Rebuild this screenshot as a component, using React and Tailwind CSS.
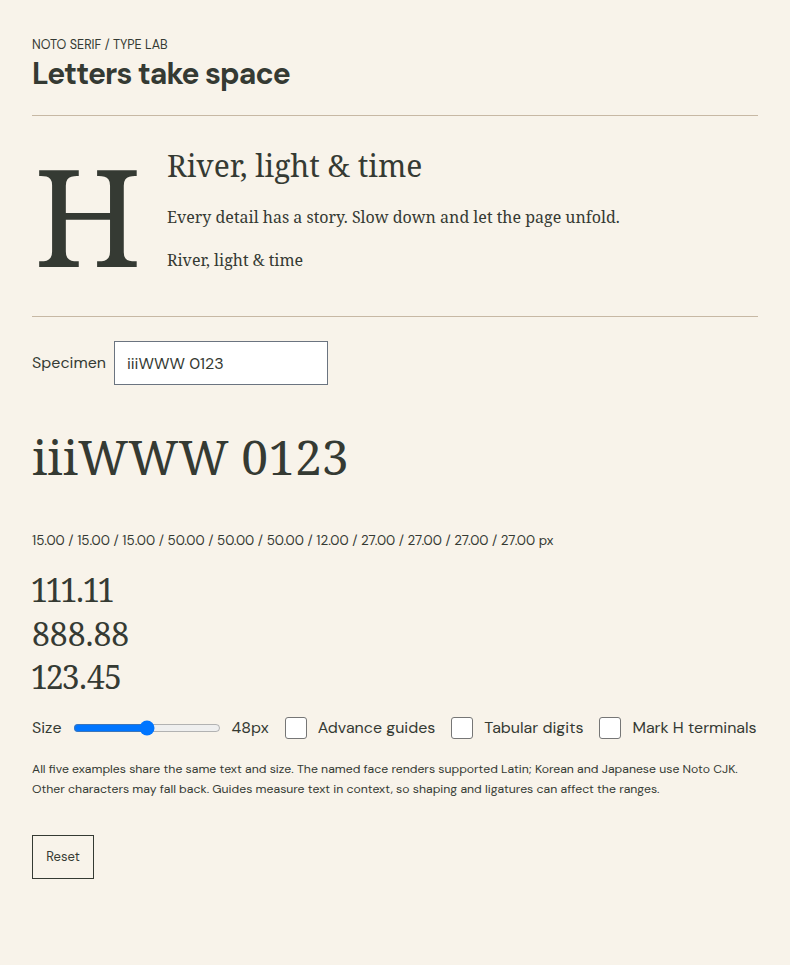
import React, { useState } from 'react'

const sans = "font-['DM_Sans','Inter','Liberation_Sans',sans-serif]"
const serif = "font-['Noto_Serif','DejaVu_Serif','Liberation_Serif',serif]"

const metrics = '15.00 / 15.00 / 15.00 / 50.00 / 50.00 / 50.00 / 12.00 / 27.00 / 27.00 / 27.00 / 27.00 px'

const Check = ({ label }) => (
    <label className="flex items-center gap-[11px] shrink-0 whitespace-nowrap">
        <input type="checkbox" className="w-[22px] h-[22px] m-0 appearance-none bg-white border border-[#767676] rounded-[3px]" />
        <span>{label}</span>
    </label>
)

const App = () => {
    const [specimen, setSpecimen] = useState('iiiWWW 0123')
    const [size, setSize] = useState(48)

    return (
        <div className={`min-h-[965px] bg-[#f8f3ea] text-[#353a33] ${sans}`}>
            <div className="px-8 pt-[37px] pb-10">
                {/* header */}
                <p className="text-[12.6px] leading-4 uppercase">Noto Serif / Type Lab</p>
                <h1 className="text-[30px] leading-9 font-bold tracking-[-0.03em] mt-[3px]">Letters take space</h1>
                <hr className="mt-[23px] border-0 border-t border-[#c7b8a4]" />

                {/* hero */}
                <div className={`flex items-start gap-[28px] pt-[18px] pb-[33px] ${serif}`}>
                    <div className="text-[136px] leading-[136px] pl-[2px] w-[107px] shrink-0 mt-[13px]">H</div>
                    <div className="pt-[14px]">
                        <h2 className="text-[30px] leading-[36px]">River, light &amp; time</h2>
                        <p className="text-base mt-[21px]">Every detail has a story. Slow down and let the page unfold.</p>
                        <p className="text-base mt-[19px]">River, light &amp; time</p>
                    </div>
                </div>
                <hr className="border-0 border-t border-[#c7b8a4]" />

                {/* specimen input */}
                <div className="flex items-center gap-2 mt-6 text-base">
                    <span>Specimen</span>
                    <input
                        value={specimen}
                        onChange={e => setSpecimen(e.target.value)}
                        className="w-[214px] h-[44px] px-3 bg-white border border-[#6b7480] outline-none text-base"
                    />
                </div>

                <div className={`mt-[44px] leading-[56px] ${serif}`} style={{ fontSize: size }}>{specimen}</div>

                <p className="text-[13.4px] leading-5 mt-[46px]">{metrics}</p>

                <div className={`mt-[17px] text-[32px] leading-[43.5px] proportional-nums ${serif}`}>
                    <div>111.11</div>
                    <div>888.88</div>
                    <div>123.45</div>
                </div>

                {/* controls */}
                <div className="flex items-center gap-4 mt-[17px] text-base whitespace-nowrap">
                    <div className="flex items-center gap-[11px] shrink-0">
                        <span>Size</span>
                        <input
                            type="range"
                            min="16"
                            max="80"
                            value={size}
                            onChange={e => setSize(Number(e.target.value))}
                            className="w-[148px] m-0 shrink-0"
                        />
                        <span>{size}px</span>
                    </div>
                    <Check label="Advance guides" />
                    <Check label="Tabular digits" />
                    <Check label="Mark H terminals" />
                </div>

                <p className="text-[12.25px] leading-5 mt-[19px]">
                    All five examples share the same text and size. The named face renders supported Latin; Korean and Japanese use Noto CJK. Other characters may fall back. Guides measure text in context, so shaping and ligatures can affect the ranges.
                </p>

                <button className="mt-[36px] w-[62px] h-[44px] border border-[#353a33] text-[13px]">Reset</button>
            </div>
        </div>
    )
}

export default App
